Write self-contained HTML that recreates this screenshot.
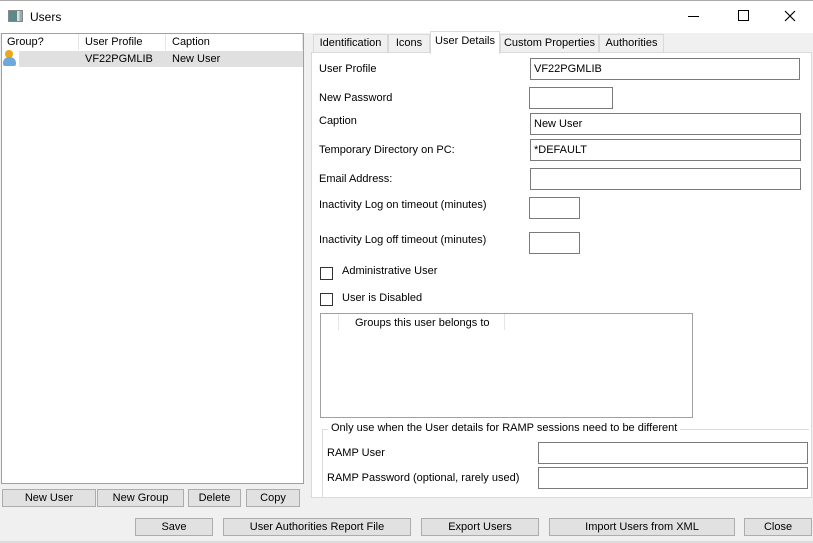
<!DOCTYPE html><html><head><style>
*{box-sizing:border-box;margin:0;padding:0}
body{width:813px;height:543px;background:#f0f0f0;font-family:"Liberation Sans",Tahoma,sans-serif;font-size:11px;color:#000;position:relative;overflow:hidden}
.a{position:absolute}
.in{position:absolute;background:#fff;border:1px solid #7a7a7a;padding:0 3px;font-size:11px;line-height:20px}
.btn{position:absolute;background:#e1e1e1;border:1px solid #adadad;text-align:center;line-height:17px;font-size:11px}
.cb{position:absolute;width:13px;height:13px;border:1px solid #333;background:#fff}
.tab{position:absolute;top:34px;height:19px;border:1px solid #d9d9d9;background:#f0f0f0;line-height:17px;text-align:center}
</style></head><body>
<div class="a" style="left:0;top:0;width:813px;height:33px;background:#fff;border-top:1px solid #aaa"></div>
<div class="a" style="left:8px;top:10px;width:15px;height:12px;border:1px solid #888;background:linear-gradient(90deg,#5a8a8a 0 60%,#ddd 60% 80%,#9aa 80%)"></div>
<div class="a" style="left:30px;top:10px;font-size:12px">Users</div>
<div class="a" style="left:688px;top:16px;width:11px;height:1px;background:#000"></div>
<div class="a" style="left:738px;top:10px;width:11px;height:11px;border:1px solid #000"></div>
<svg class="a" style="left:784px;top:10px" width="12" height="12"><path d="M1 1L11 11M11 1L1 11" stroke="#000" stroke-width="1.2"/></svg>

<div class="a" style="left:1px;top:33px;width:303px;height:451px;background:#fff;border:1px solid #a0a0a0"></div>
<div class="a" style="left:7px;top:36px">Group?</div>
<div class="a" style="left:78px;top:34px;width:1px;height:16px;background:#e5e5e5"></div>
<div class="a" style="left:85px;top:36px">User Profile</div>
<div class="a" style="left:165px;top:34px;width:1px;height:16px;background:#e5e5e5"></div>
<div class="a" style="left:172px;top:36px">Caption</div>
<div class="a" style="left:302px;top:34px;width:1px;height:16px;background:#e5e5e5"></div>
<div class="a" style="left:19px;top:51px;width:284px;height:16px;background:#e0e0e0"></div>
<div class="a" style="left:5px;top:50px;width:8px;height:8px;border-radius:50%;background:#e8a81a"></div>
<div class="a" style="left:3px;top:57px;width:13px;height:9px;border-radius:6px 6px 2px 2px;background:#6fa8dc"></div>
<div class="a" style="left:85px;top:53px">VF22PGMLIB</div>
<div class="a" style="left:172px;top:53px">New User</div>

<div class="btn" style="left:2px;top:489px;width:94px;height:18px">New User</div>
<div class="btn" style="left:97px;top:489px;width:87px;height:18px">New Group</div>
<div class="btn" style="left:188px;top:489px;width:53px;height:18px">Delete</div>
<div class="btn" style="left:246px;top:489px;width:54px;height:18px">Copy</div>

<div class="a" style="left:311px;top:52px;width:501px;height:446px;border:1px solid #d9d9d9;background:#fff"></div>
<div class="tab" style="left:313px;width:75px">Identification</div>
<div class="tab" style="left:388px;width:42px">Icons</div>
<div class="tab" style="left:500px;width:99px">Custom Properties</div>
<div class="tab" style="left:599px;width:65px">Authorities</div>
<div class="tab" style="left:430px;top:31px;width:70px;height:23px;background:#fff;border-bottom:none;line-height:18px">User Details</div>

<div class="a" style="left:319px;top:63px">User Profile</div>
<div class="in" style="left:530px;top:58px;width:270px;height:22px">VF22PGMLIB</div>
<div class="a" style="left:319px;top:92px">New Password</div>
<div class="in" style="left:529px;top:87px;width:84px;height:22px"></div>
<div class="a" style="left:319px;top:115px">Caption</div>
<div class="in" style="left:530px;top:113px;width:271px;height:22px">New User</div>
<div class="a" style="left:319px;top:144px">Temporary Directory on PC:</div>
<div class="in" style="left:530px;top:139px;width:271px;height:22px">*DEFAULT</div>
<div class="a" style="left:319px;top:173px">Email Address:</div>
<div class="in" style="left:530px;top:168px;width:271px;height:22px"></div>
<div class="a" style="left:319px;top:199px">Inactivity Log on timeout (minutes)</div>
<div class="in" style="left:529px;top:197px;width:51px;height:22px"></div>
<div class="a" style="left:319px;top:234px">Inactivity Log off timeout (minutes)</div>
<div class="in" style="left:529px;top:232px;width:51px;height:22px"></div>
<div class="cb" style="left:320px;top:267px"></div>
<div class="a" style="left:342px;top:265px">Administrative User</div>
<div class="cb" style="left:320px;top:293px"></div>
<div class="a" style="left:342px;top:292px">User is Disabled</div>

<div class="a" style="left:320px;top:313px;width:373px;height:105px;border:1px solid #a0a0a0;background:#fff"></div>
<div class="a" style="left:338px;top:314px;width:1px;height:16px;background:#e5e5e5"></div>
<div class="a" style="left:355px;top:317px">Groups this user belongs to</div>
<div class="a" style="left:504px;top:314px;width:1px;height:16px;background:#e5e5e5"></div>

<div class="a" style="left:322px;top:429px;width:487px;height:69px;border:1px solid #dcdcdc;border-right:none"></div>
<div class="a" style="left:328px;top:422px;background:#fff;padding:0 3px">Only use when the User details for RAMP sessions need to be different</div>
<div class="a" style="left:327px;top:447px">RAMP User</div>
<div class="in" style="left:538px;top:442px;width:270px;height:22px"></div>
<div class="a" style="left:327px;top:472px">RAMP Password (optional, rarely used)</div>
<div class="in" style="left:538px;top:467px;width:270px;height:22px"></div>

<div class="btn" style="left:135px;top:518px;width:78px;height:18px">Save</div>
<div class="btn" style="left:223px;top:518px;width:188px;height:18px">User Authorities Report File</div>
<div class="btn" style="left:421px;top:518px;width:118px;height:18px">Export Users</div>
<div class="btn" style="left:549px;top:518px;width:186px;height:18px">Import Users from XML</div>
<div class="btn" style="left:744px;top:518px;width:68px;height:18px">Close</div>
<div class="a" style="left:0;top:541px;width:813px;height:2px;background:#dcdcdc"></div>
</body></html>
